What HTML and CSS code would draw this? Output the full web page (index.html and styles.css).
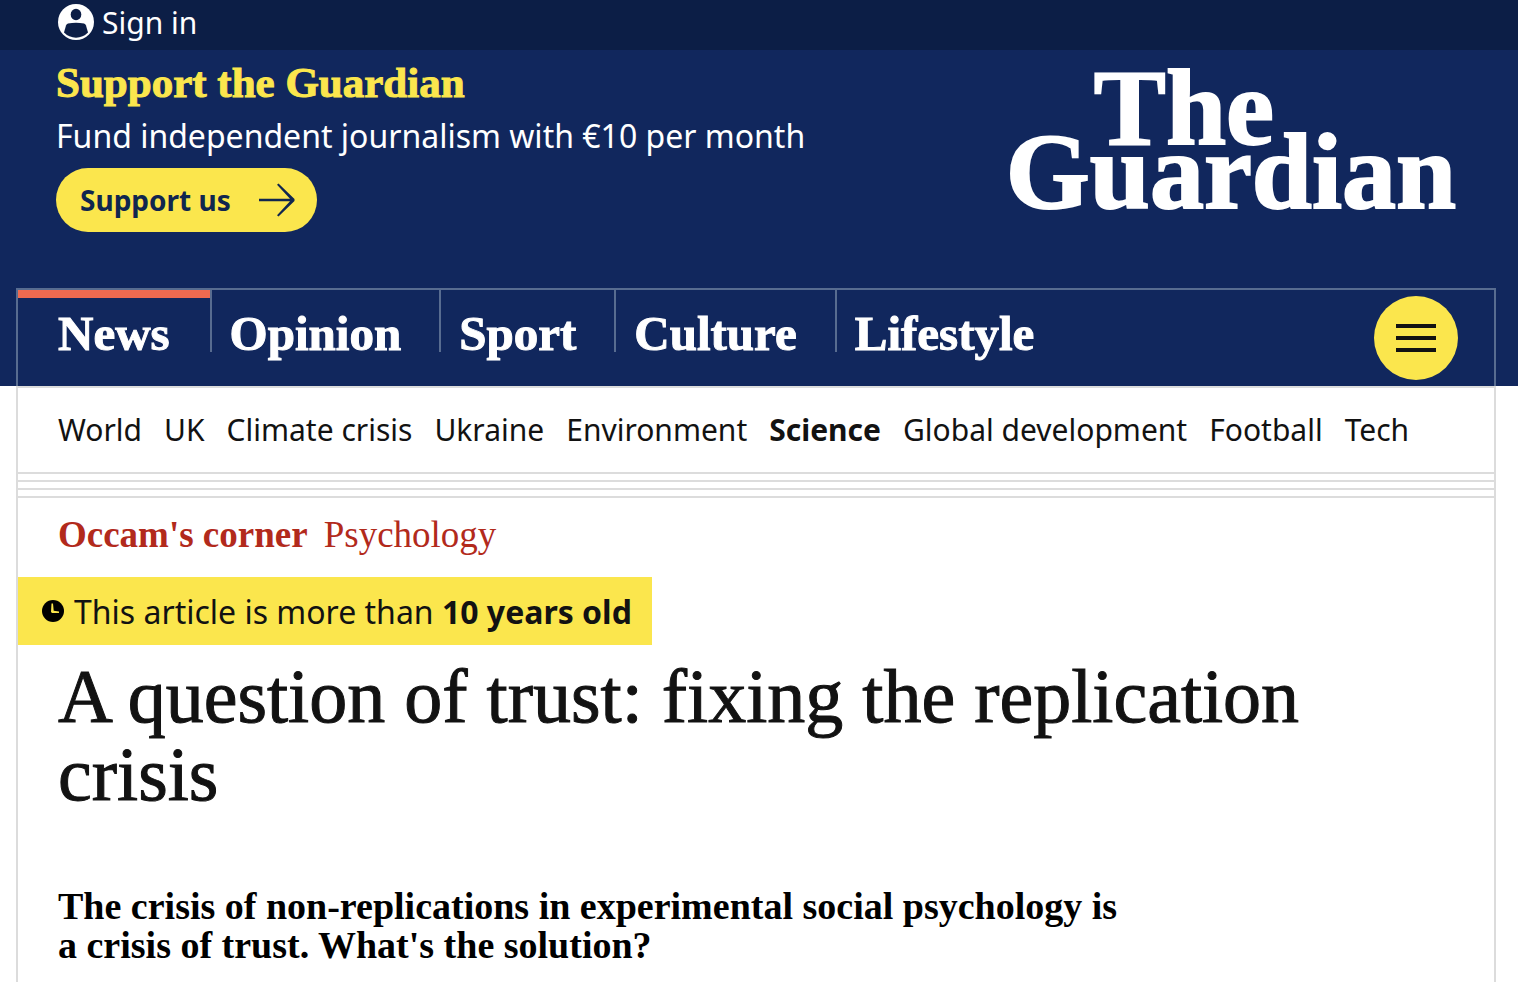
FILE: index.html
```html
<!DOCTYPE html>
<html lang="en">
<head>
<meta charset="utf-8">
<meta name="viewport" content="width=device-width, initial-scale=1">
<title>A question of trust: fixing the replication crisis | The Guardian</title>
<link rel="stylesheet" href="styles.css">
</head>
<body>
<div class="topbar">
  <a class="signin" href="#">
    <svg class="signin-icon" viewBox="0 0 36 36" aria-hidden="true">
      <circle cx="18" cy="18" r="18" fill="#fff"/>
      <ellipse cx="18" cy="10.500" rx="5.300" ry="5.800" fill="#0c1e46"/>
      <path d="M6 28.500 8 21.500Q8.500 20 10 19.600 18 18 26 19.600 27.500 20 28 21.500L30 28.500A16.500 16.500 0 0 1 6 28.500Z" fill="#0c1e46"/>
    </svg>
    <span>Sign in</span>
  </a>
</div>
<header class="header">
  <div class="masthead">
    <div class="support">
      <h2 class="support-title">Support the Guardian</h2>
      <p class="support-text">Fund independent journalism with €10 per month</p>
      <a class="support-button" href="#">
        <span>Support us</span>
        <svg class="arrow" viewBox="0 0 36 34" aria-hidden="true" fill="#10264f">
          <path d="M0 15.700H31L18 1.800 19.500 .500 35.500 16V18L19.500 33.500 18 32.200 31 18.300H0Z"/>
        </svg>
      </a>
    </div>
    <a class="logo" href="#" aria-label="The Guardian">
      <span class="logo-the">The</span>
      <span>Guardian</span>
    </a>
  </div>
  <nav class="pillars" aria-label="Sections">
    <a class="pillar pillar-current" href="#">News</a>
    <a class="pillar" href="#">Opinion</a>
    <a class="pillar" href="#">Sport</a>
    <a class="pillar" href="#">Culture</a>
    <a class="pillar" href="#">Lifestyle</a>
    <button class="menu" type="button" aria-label="Menu">
      <span class="menu-line"></span>
      <span class="menu-line"></span>
      <span class="menu-line"></span>
    </button>
  </nav>
</header>
<div class="page">
  <nav class="subnav" aria-label="News">
    <a href="#">World</a>
    <a href="#">UK</a>
    <a href="#">Climate crisis</a>
    <a href="#">Ukraine</a>
    <a href="#">Environment</a>
    <a class="subnav-current" href="#">Science</a>
    <a href="#">Global development</a>
    <a href="#">Football</a>
    <a href="#">Tech</a>
  </nav>
  <div class="rules"></div>
  <main class="article">
    <div class="labels">
      <a class="label-series" href="#">Occam's corner</a>
      <a href="#">Psychology</a>
    </div>
    <div class="age">
      <svg class="clock" viewBox="0 0 22 22" aria-hidden="true">
        <circle cx="11" cy="11" r="11" fill="#000"/>
        <path d="M9.500 3.500H11L11.700 10.800 17 11.500V13H10L9 12Z" fill="#fbe64d"/>
      </svg>
      <span>This article is more than <strong>10 years old</strong></span>
    </div>
    <h1 class="headline">A question of trust: fixing the replication crisis</h1>
    <p class="standfirst">The crisis of non-replications in experimental social psychology is a crisis of trust. What's the solution?</p>
  </main>
</div>
</body>
</html>
```
FILE: styles.css
```css
:root {
  --navy: #11275d;
  --yellow: #fbe64d;
  --line: #dcdcdc;
  --line-navy: #586c90;
  --ink: #121212;
  --serif: "Liberation Serif", serif;
  --sans: "Noto Sans", sans-serif;
}

* {
  box-sizing: border-box;
}

body {
  display: flex;
  flex-direction: column;
  min-height: 100vh;
  margin: 0;
  background: #fff;
  color: var(--ink);
  font-family: var(--sans);
  font-size: 32px;
}

a {
  color: inherit;
  text-decoration: none;
}

h1,
h2,
p {
  margin: 0;
}

.topbar {
  display: flex;
  height: 50px;
  padding: 0 58px;
  background: #0c1e46;
  color: #fff;
}

.signin {
  display: flex;
  align-items: center;
  gap: 8px;
  height: 44px;
  font-size: 30px;
}

.signin-icon {
  width: 36px;
  height: 36px;
}

.header {
  padding: 0 22px 0 16px;
  background: var(--navy);
  color: #fff;
}

.masthead {
  display: flex;
  justify-content: space-between;
  align-items: flex-start;
  height: 238px;
  padding: 8px 40px 0;
}

.support-title {
  color: var(--yellow);
  font: bold 43px/50px var(--serif);
  -webkit-text-stroke: 1px var(--yellow);
}

.support-text {
  line-height: 56px;
}

.support-button {
  display: inline-flex;
  align-items: center;
  gap: 28px;
  height: 64px;
  margin-top: 4px;
  padding: 0 22px 0 24px;
  border-radius: 32px;
  background: var(--yellow);
  color: #10264f;
  font-size: 28px;
  font-weight: bold;
}

.arrow {
  width: 36px;
  height: 34px;
}

.logo {
  display: flex;
  flex-direction: column;
  padding-top: 18px;
  font: bold 108px/64px var(--serif);
  -webkit-text-stroke: 2px #fff;
}

.logo-the {
  padding-left: 88px;
}

.pillars {
  display: flex;
  align-items: flex-start;
  height: 98px;
  border: 2px solid var(--line-navy);
  border-bottom: 0;
}

.pillar {
  height: 62px;
  padding: 0 38px 0 18px;
  border-right: 2px solid var(--line-navy);
  font: bold 49px/88px var(--serif);
  -webkit-text-stroke: 1px #fff;
}

.pillar:last-of-type {
  border-right: 0;
}

.pillar-current {
  padding: 0 40px;
  background: linear-gradient(#ee6a50 8px, transparent 8px);
}

.menu {
  display: flex;
  flex-direction: column;
  align-items: center;
  justify-content: center;
  gap: 8px;
  width: 84px;
  height: 84px;
  margin: 6px 36px 0 auto;
  padding: 0;
  border: 0;
  border-radius: 50%;
  background: var(--yellow);
}

.menu-line {
  width: 40px;
  height: 4px;
  background: var(--ink);
}

.page {
  flex: 1;
  margin: 0 22px 0 16px;
  border: solid var(--line);
  border-width: 2px 2px 0;
}

.subnav {
  display: flex;
  flex-wrap: wrap;
  column-gap: 22px;
  padding: 0 40px;
  font-size: 30px;
  line-height: 84px;
}

.subnav-current {
  font-weight: bold;
}

.rules {
  height: 26px;
  background: repeating-linear-gradient(var(--line) 0 2px, #fff 2px 8px);
}

.article {
  padding: 12px 40px 16px;
}

.labels {
  display: flex;
  gap: 16px;
  color: #b22a1c;
  font: 37px/50px var(--serif);
}

.label-series {
  font-weight: bold;
}

.age {
  display: flex;
  align-items: center;
  gap: 10px;
  width: fit-content;
  height: 68px;
  margin: 17px 0 0 -40px;
  padding: 0 20px 0 24px;
  background: var(--yellow);
}

.clock {
  width: 22px;
  height: 22px;
}

.headline {
  margin-top: 12px;
  font: 76px/78px var(--serif);
  -webkit-text-stroke: 1px var(--ink);
}

.standfirst {
  max-width: 1080px;
  margin-top: 74px;
  color: #000;
  font: bold 38px/39px var(--serif);
}
```
